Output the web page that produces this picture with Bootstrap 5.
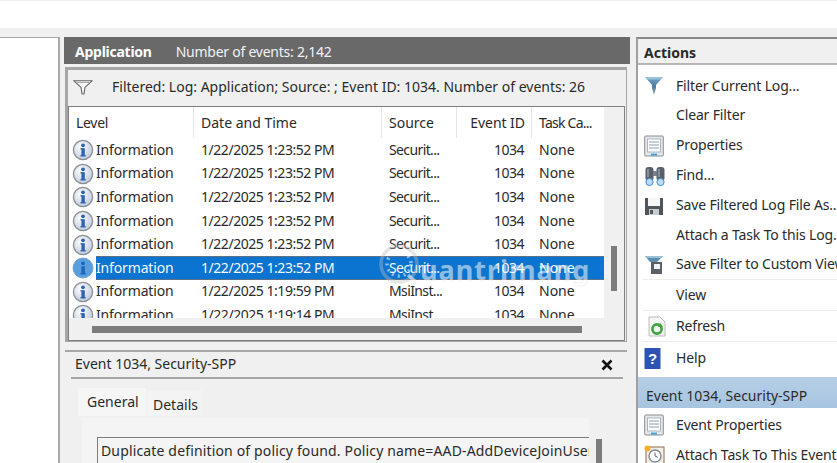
<!DOCTYPE html>
<html lang="en"><head><meta charset="utf-8">
<title>Event Viewer</title>
<link href="https://cdn.jsdelivr.net/npm/bootstrap@5.3.0/dist/css/bootstrap.min.css" rel="stylesheet">
<style>
html,body{height:463px;overflow:hidden}
body{background:#f0f0f0;font-family:"Noto Sans","Open Sans",sans-serif;font-size:14px;color:#2a2a2a;line-height:1.2}
.strip{height:28px;background:#fff;border-top:1px solid #eee}
.shell{height:435px;padding-top:9px}
.leftp{width:60px;flex:none;background:#fff;border:1px solid #a8a8a8;border-left:0;border-bottom:0;border-right-width:2px}
.centerp{width:566px;margin-left:4px;flex:none}
.appbar{height:27px;background:#696969;color:#f2f2f2;padding:3px 0 0 11px;gap:24px;letter-spacing:-.25px}
.appbar b{font-weight:700;color:#fff;letter-spacing:-.25px}
.filterbox{margin:3px 3px 0 1px;height:275px;border:3px solid #a6a6a6;border-bottom-width:1px;border-right-width:1px}
.filterline{height:36px;padding:0 0 2px 5px;gap:19px}
.grid{height:235px;border:1px solid #7f7f7f;background:#f0f0f0;position:relative;overflow:hidden;margin-right:1px}
.listarea{width:535px;height:211px;background:#fff;overflow:hidden}
.colrow{display:grid;grid-template-columns:125px 188px 75px 75px 72px;align-items:center}
.heads{height:31px;margin-bottom:.5px}
.heads span{height:31px;line-height:31px;padding-left:7px;border-right:1px solid #e6e6e6}
.heads span:nth-child(1){letter-spacing:-.3px}
.heads span:nth-child(4){text-align:right;padding-right:6px;letter-spacing:-.05px}
.heads span:last-child{border:0;letter-spacing:-.75px}
.rowitem{height:23.6px}
.colrow .num{text-align:right;padding-right:8px;letter-spacing:-.5px}
.cellin{padding-left:7px;white-space:nowrap}
.dt{letter-spacing:-.46px}
.src{letter-spacing:-.62px}
.first{display:flex;align-items:center;gap:2px;padding-left:3px}
.lbl{letter-spacing:-.15px}
.rowitem.sel{color:#f4f8fc}
.rowitem.sel>div:not(.first),.rowitem.sel .lbl{align-self:stretch;height:23.6px;line-height:21.6px;background:#0a74d0;border-block:1px solid #5f7185}
.rowitem.sel .lbl{flex-grow:1}
.hbar{height:7px;width:490px;background:#7c7c7c;margin:8px 0 0 23px}
.vbar{width:6px;height:45px;background:#7c7c7c;position:absolute;left:542px;top:139px}
.wmark{position:absolute;left:309px;top:136px;display:flex;align-items:center;color:rgba(255,255,255,.55);font-size:27px;font-weight:700;line-height:1;letter-spacing:1px;pointer-events:none;-webkit-text-stroke:1px rgba(150,150,150,.14)}
.wmark span{margin-top:9px}
.lowerp{margin:8px 3px 0 1px;height:120px;border-top:2px solid #a6a6a6}
.lowerhead{height:27px;margin:0 4px 0 6px;border-bottom:2px solid #a6a6a6;padding:0 10px 0 4px}
.tabsrow{margin:9px 0 0 13px;height:28px;align-items:flex-end}
.tabg{width:68px;height:28px;background:#f6f6f6;line-height:28px;padding-left:9px}
.tabd{width:55px;height:26px;background:#f3f3f3;line-height:29px;padding-left:6px;margin-left:1px}
.tabwrap{margin:2px 0 0 17px}
.tabpage{width:507px;flex:none;height:60px;background:#f4f4f4;padding:19px 0 0 15px}
.msg{border:1px solid #7d7d7d;border-bottom:0;border-right:0;height:40px;padding:5px 0 0 3px;white-space:nowrap;overflow:hidden;letter-spacing:.15px}
.msgbar{width:6px;height:30px;background:#7c7c7c;flex:none;margin:21px 0 0 7px}
.actions{width:201px;margin-left:6px;flex:none;border:2px solid #a0a0a0;border-right:0;border-bottom:0;background:#fff;overflow:hidden;border-top-color:#8a8a8a;letter-spacing:-.15px}
.acthead{height:26px;background:#f0f0f0;border-bottom:2px solid #b5b5b5;padding-left:6px;font-weight:700;line-height:27px;letter-spacing:0;margin-bottom:6px}
.actitem{height:29.9px;white-space:nowrap;display:flex;align-items:center}
.actico{width:38px;flex:none;display:flex;justify-content:flex-start;padding-left:6px}
.sepb{border-bottom:1px solid #ececec;margin-left:5px}
.sepb .actico{width:33px;padding-left:1px}
.rowtall{height:31px}
.helprow{height:33px}
.blue{height:31px;background:linear-gradient(#b6cfe6,#a7c4e0);line-height:31px;padding:3px 0 0 8px;margin-top:2px;white-space:nowrap;letter-spacing:0}
.proprow{height:34px}
.lastrow{height:27px}
</style></head>
<body>
<svg width="0" height="0" class="d-block" aria-hidden="true"><defs>
<radialGradient id="ig" cx=".4" cy=".35" r=".8"><stop offset="0" stop-color="#fff"/><stop offset="1" stop-color="#b4c0d2"/></radialGradient>
<linearGradient id="fg" x1="0" y1="0" x2="0" y2="1"><stop offset="0" stop-color="#6fa4c8"/><stop offset=".5" stop-color="#4f7f9f"/><stop offset="1" stop-color="#8d9aa4"/></linearGradient>
<symbol id="info" viewBox="0 0 22 22"><circle cx="11" cy="11" r="9.6" fill="url(#ig)" stroke="#8a8f98" stroke-width="1.3"/><rect x="9.4" y="9.2" width="3.4" height="8" fill="#2d62b4"/><rect x="8.4" y="9.2" width="2" height="1.2" fill="#2d62b4"/><rect x="8.4" y="16.2" width="5.4" height="1.2" fill="#2d62b4"/><circle cx="11" cy="6.3" r="1.9" fill="#2d62b4"/></symbol>
<symbol id="infosel" viewBox="0 0 22 22"><circle cx="11" cy="11" r="10" fill="#5a9fdc" stroke="#6ea8d8" stroke-width="1"/><rect x="9.4" y="9.2" width="3.4" height="8" fill="#1f64bd"/><rect x="8.4" y="16.2" width="5.4" height="1.2" fill="#1f64bd"/><circle cx="11" cy="6.3" r="1.9" fill="#1f64bd"/></symbol>
<symbol id="props" viewBox="0 0 20 22"><rect x=".7" y="1" width="18.6" height="20" rx="1" fill="#e4e8ee" stroke="#8c8c8c"/><rect x="3.5" y="4" width="13" height="13" fill="#fff" stroke="#aab4c0"/><path d="M5 7h10M5 10h10M5 13h10" stroke="#8d9cb0"/><rect x="7" y="18.6" width="6" height="2" fill="#3fa3d8"/></symbol>
</defs></svg>

<div class="strip"></div>
<div class="shell d-flex">
  <div class="leftp"></div>
  <div class="centerp">
    <div class="appbar d-flex align-items-center"><b>Application</b><span>Number of events: 2,142</span></div>
    <div class="filterbox">
      <div class="filterline d-flex align-items-center">
        <svg width="20" height="15" viewBox="0 0 20 15"><path d="M.7.7h18.6L12 7.4 11 14H9L8 7.4z" fill="#f6f6f6" stroke="#666" stroke-width="1.1" stroke-linejoin="round"/><path d="M3 2.5h14" stroke="#aaa"/></svg>
        <span>Filtered: Log: Application; Source: ; Event ID: 1034. Number of events: 26</span>
      </div>
      <div class="grid">
        <div class="listarea">
          <div class="colrow heads"><span>Level</span><span>Date and Time</span><span>Source</span><span>Event ID</span><span>Task Ca...</span></div>
          <div class="colrow rowitem"><div class="first"><svg width="22" height="22"><use href="#info"/></svg><span class="lbl">Information</span></div><div class="cellin dt">1/22/2025 1:23:52 PM</div><div class="cellin src">Securit...</div><div class="num">1034</div><div class="cellin">None</div></div>
          <div class="colrow rowitem"><div class="first"><svg width="22" height="22"><use href="#info"/></svg><span class="lbl">Information</span></div><div class="cellin dt">1/22/2025 1:23:52 PM</div><div class="cellin src">Securit...</div><div class="num">1034</div><div class="cellin">None</div></div>
          <div class="colrow rowitem"><div class="first"><svg width="22" height="22"><use href="#info"/></svg><span class="lbl">Information</span></div><div class="cellin dt">1/22/2025 1:23:52 PM</div><div class="cellin src">Securit...</div><div class="num">1034</div><div class="cellin">None</div></div>
          <div class="colrow rowitem"><div class="first"><svg width="22" height="22"><use href="#info"/></svg><span class="lbl">Information</span></div><div class="cellin dt">1/22/2025 1:23:52 PM</div><div class="cellin src">Securit...</div><div class="num">1034</div><div class="cellin">None</div></div>
          <div class="colrow rowitem"><div class="first"><svg width="22" height="22"><use href="#info"/></svg><span class="lbl">Information</span></div><div class="cellin dt">1/22/2025 1:23:52 PM</div><div class="cellin src">Securit...</div><div class="num">1034</div><div class="cellin">None</div></div>
          <div class="colrow rowitem sel"><div class="first"><svg width="22" height="22"><use href="#infosel"/></svg><span class="lbl">Information</span></div><div class="cellin dt">1/22/2025 1:23:52 PM</div><div class="cellin src">Securit...</div><div class="num">1034</div><div class="cellin">None</div></div>
          <div class="colrow rowitem"><div class="first"><svg width="22" height="22"><use href="#info"/></svg><span class="lbl">Information</span></div><div class="cellin dt">1/22/2025 1:19:59 PM</div><div class="cellin src">MsiInst...</div><div class="num">1034</div><div class="cellin">None</div></div>
          <div class="colrow rowitem"><div class="first"><svg width="22" height="22"><use href="#info"/></svg><span class="lbl">Information</span></div><div class="cellin dt">1/22/2025 1:19:14 PM</div><div class="cellin src">MsiInst...</div><div class="num">1034</div><div class="cellin">None</div></div>
        </div>
        <div class="hbar"></div>
        <div class="vbar"></div>
        <div class="wmark"><svg width="42" height="44" viewBox="0 0 42 44" fill="none" stroke="rgba(255,255,255,.55)" stroke-width="3.5"><circle cx="21" cy="21" r="18" stroke="rgba(190,190,190,.4)"/><circle cx="21" cy="21" r="12" stroke-dasharray="2 4"/><path d="M30 32l8 7"/></svg><span>uantrimang</span></div>
      </div>
    </div>
    <div class="lowerp">
      <div class="lowerhead d-flex align-items-center justify-content-between"><span>Event 1034, Security-SPP</span><svg width="12" height="12" viewBox="0 0 12 12" aria-label="Close"><path d="M1.5 1.5l9 9M10.5 1.5l-9 9" stroke="#111" stroke-width="2.6"/></svg></div>
      <div class="tabsrow d-flex"><div class="tabg">General</div><div class="tabd">Details</div></div>
      <div class="tabwrap d-flex"><div class="tabpage"><div class="msg">Duplicate definition of policy found. Policy name=AAD-AddDeviceJoinUser</div></div><div class="msgbar"></div></div>
    </div>
  </div>
  <div class="actions">
    <div class="acthead">Actions</div>
    <div class="actitem"><span class="actico"><svg width="20" height="20" viewBox="0 0 20 20"><path d="M1 1h18l-7 8v3l-2 7-2-7V9z" fill="url(#fg)"/><path d="M1 1h18l-2 2.5H3z" fill="#9cc3dc"/></svg></span>Filter Current Log...</div>
    <div class="actitem"><span class="actico"></span>Clear Filter</div>
    <div class="actitem"><span class="actico"><svg width="20" height="22"><use href="#props"/></svg></span>Properties</div>
    <div class="actitem"><span class="actico"><svg width="22" height="22" viewBox="0 0 22 22"><rect x="1.5" y="2" width="8" height="14" rx="3" fill="#59606a"/><rect x="12.5" y="2" width="8" height="14" rx="3" fill="#59606a"/><rect x="9" y="6" width="4" height="5" fill="#7a808a"/><circle cx="5.5" cy="17" r="3.6" fill="#bcdcf5" stroke="#3f8ccf"/><circle cx="16.5" cy="17" r="3.6" fill="#bcdcf5" stroke="#3f8ccf"/><path d="M4 4v8M15 4v8" stroke="#b8bec6"/></svg></span>Find...</div>
    <div class="actitem"><span class="actico"><svg width="20" height="20" viewBox="0 0 20 20"><path d="M1 2h18v17H1z" fill="#50565e"/><rect x="4" y="2" width="12" height="8" fill="#f6f6f6"/><rect x="5" y="13" width="10" height="6" fill="#c9ccd0"/><rect x="6" y="14" width="3" height="4" fill="#50565e"/></svg></span>Save Filtered Log File As...</div>
    <div class="actitem"><span class="actico"></span>Attach a Task To this Log...</div>
    <div class="actitem sepb"><span class="actico"><svg width="22" height="20" viewBox="0 0 22 20"><path d="M1 1h18l-6 6H6z" fill="#5c8fae"/><path d="M1 1h18l-2 2H3z" fill="#9ac0d8"/><path d="M7 7h11v12H7z" fill="#5a6068"/><rect x="10" y="9" width="6" height="5" fill="#f2f2f2"/></svg></span>Save Filter to Custom View...</div>
    <div class="actitem sepb rowtall"><span class="actico"></span>View</div>
    <div class="actitem sepb rowtall"><span class="actico"><svg class="ms-1" width="18" height="21" viewBox="0 0 18 21"><path d="M1 1h11l5 5v14H1z" fill="#f4f6f4" stroke="#b9bdb9"/><circle cx="9" cy="13" r="4.6" fill="none" stroke="#3da53d" stroke-width="2.6"/><path d="M12 7l3 4-5 0z" fill="#3da53d"/></svg></span>Refresh</div>
    <div class="actitem helprow"><span class="actico"><svg width="17" height="21" viewBox="0 0 17 21"><rect width="16" height="21" x=".5" fill="#2d54b4"/><text x="8.5" y="16" text-anchor="middle" font-family="Liberation Sans" font-size="15" font-weight="700" fill="#fff">?</text></svg></span>Help</div>
    <div class="blue">Event 1034, Security-SPP</div>
    <div class="actitem proprow"><span class="actico"><svg width="20" height="22"><use href="#props"/></svg></span>Event Properties</div>
    <div class="actitem lastrow"><span class="actico"><svg width="21" height="21" viewBox="0 0 21 21"><rect x="2" y="2" width="18" height="18" fill="#f4efe6" stroke="#8f6b4a"/><circle cx="11" cy="11" r="6" fill="#fff" stroke="#7d8a96" stroke-width="1.4"/><path d="M11 7.5V11l3 1.5" fill="none" stroke="#666"/><circle cx="3.5" cy="3.5" r="3" fill="#f0b030"/></svg></span>Attach Task To This Event...</div>
  </div>
</div>
</body></html>
